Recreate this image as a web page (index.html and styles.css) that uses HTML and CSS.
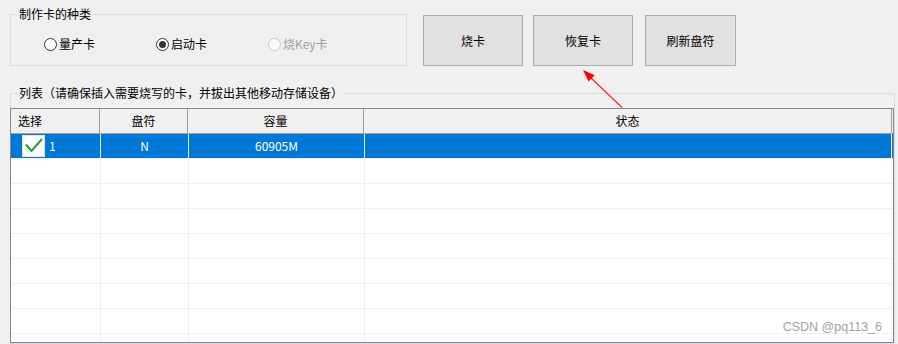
FILE: index.html
```html
<!DOCTYPE html>
<html lang="zh-CN">
<head>
<meta charset="UTF-8">
<title>制作卡</title>
<link rel="stylesheet" href="styles.css">
</head>
<body>
    <div class="top">
        <fieldset class="group kind">
            <legend>制作卡的种类</legend>
            <div class="options">
                <label class="radio"><span class="dot"></span>量产卡</label>
                <label class="radio checked"><span class="dot"></span>启动卡</label>
                <label class="radio disabled"><span class="dot"></span>烧Key卡</label>
            </div>
        </fieldset>
        <div class="actions">
            <button class="btn burn">烧卡</button>
            <button class="btn restore">恢复卡</button>
            <button class="btn refresh">刷新盘符</button>
        </div>
    </div>

    <fieldset class="group list-group">
        <legend>列表（请确保插入需要烧写的卡，并拔出其他移动存储设备）</legend>
        <div class="listview">
            <div class="row head">
                <div class="cell first">选择</div>
                <div class="cell">盘符</div>
                <div class="cell">容量</div>
                <div class="cell">状态</div>
            </div>
            <div class="row sel">
                <div class="cell first">
                    <span class="check">
                        <svg width="21" height="20" viewBox="0 0 21 20"><path d="M3 8.5 L8.5 15 L19 3" fill="none" stroke="#2b9a3c" stroke-width="2"/></svg>
                    </span>1
                </div>
                <div class="cell">N</div>
                <div class="cell">60905M</div>
                <div class="cell"></div>
            </div>
            <div class="row"><div class="cell"></div><div class="cell"></div><div class="cell"></div><div class="cell"></div></div>
            <div class="row"><div class="cell"></div><div class="cell"></div><div class="cell"></div><div class="cell"></div></div>
            <div class="row"><div class="cell"></div><div class="cell"></div><div class="cell"></div><div class="cell"></div></div>
            <div class="row"><div class="cell"></div><div class="cell"></div><div class="cell"></div><div class="cell"></div></div>
            <div class="row"><div class="cell"></div><div class="cell"></div><div class="cell"></div><div class="cell"></div></div>
            <div class="row"><div class="cell"></div><div class="cell"></div><div class="cell"></div><div class="cell"></div></div>
            <div class="row"><div class="cell"></div><div class="cell"></div><div class="cell"></div><div class="cell"></div></div>
            <div class="row"><div class="cell"></div><div class="cell"></div><div class="cell"></div><div class="cell"></div></div>
        </div>
    </fieldset>

    <!-- annotation arrow drawn over the window -->
    <svg class="arrow" width="898" height="344" viewBox="0 0 898 344">
        <line x1="622" y1="107.5" x2="590" y2="77" stroke="#ff2020" stroke-width="1.2"/>
        <polygon points="583,70 588.5,81.6 594.7,75.2" fill="#ff0000"/>
    </svg>
    <div class="watermark">CSDN @pq113_6</div>
</body>
</html>
```
FILE: styles.css
```css
body {
    margin: 0;
    width: 898px;
    height: 344px;
    overflow: hidden;
    position: relative;
    background: #f0f0f0;
    font: 12px/16px "Noto Sans CJK SC", sans-serif;
    color: #000;
}

.top {
    display: flex;
    align-items: flex-start;
}

.group {
    border: 1px solid #dcdcdc;
    margin: 0;
    padding: 0;
    min-width: 0;
    box-sizing: border-box;
}

.group legend {
    padding: 0 2px;
    margin-left: 6px;
    line-height: 16px;
}

.kind {
    margin: 6px 0 0 10px;
    width: 397px;
    padding: 14px 0 13px 0;
}

.options {
    display: flex;
    padding-left: 33px;
}

.radio {
    display: flex;
    align-items: center;
    gap: 2px;
    width: 112px;
    height: 16px;
}

.dot {
    width: 13px;
    height: 13px;
    box-sizing: border-box;
    border: 1px solid #333;
    border-radius: 50%;
    background: #fff;
    display: flex;
    align-items: center;
    justify-content: center;
}

.checked .dot::after {
    content: "";
    width: 7px;
    height: 7px;
    border-radius: 50%;
    background: #333;
}

.disabled {
    color: #a0a0a0;
}

.disabled .dot {
    border-color: #c8c8c8;
    background: #fbfbfb;
}

.actions {
    display: flex;
    margin: 15px 0 0 16px;
}

.btn {
    height: 51px;
    width: 100px;
    padding: 0;
    margin: 0 10px 0 0;
    background: #e1e1e1;
    border: 1px solid #adadad;
    font: inherit;
    color: #000;
}

.btn.restore {
    margin-right: 12px;
}

.btn.refresh {
    width: 91px;
}

.list-group {
    margin: 19px 0 0 10px;
    width: 885px;
    padding: 7px 0 0 0;
}

.listview {
    margin-left: -1px;
    width: 884px;
    height: 235px;
    box-sizing: border-box;
    border: 1px solid #828790;
    background: #fff;
    overflow: hidden;
}

.row {
    display: grid;
    grid-template-columns: 90px 88px 176px 527px;
    height: 25px;
    box-sizing: border-box;
    border-bottom: 1px solid #f0f0f0;
}

.cell {
    display: flex;
    align-items: center;
    justify-content: center;
    box-sizing: border-box;
    border-right: 1px solid #f0f0f0;
    white-space: nowrap;
}

.cell.first {
    justify-content: flex-start;
}

.head {
    grid-template-columns: 89px 88px 176px 528px;
    background: #f0f0f0;
    border-bottom-color: #a0a0a0;
}

.head .cell {
    border-right-color: #a0a0a0;
}

.head .first {
    padding-left: 7px;
}

.sel {
    background: #0078d7;
    color: #fff;
}

.sel .first {
    padding-left: 11px;
}

.check {
    width: 23px;
    height: 22px;
    margin-right: 4px;
    box-sizing: border-box;
    border: 1px solid #e4e4e4;
    background: #fff;
    display: flex;
    align-items: center;
    justify-content: center;
}

.arrow {
    position: absolute;
    left: 0;
    top: 0;
    pointer-events: none;
}

.watermark {
    position: absolute;
    right: 16px;
    top: 319px;
    font: 12.5px/16px "Liberation Sans", sans-serif;
    color: #a3a3a3;
}
```
